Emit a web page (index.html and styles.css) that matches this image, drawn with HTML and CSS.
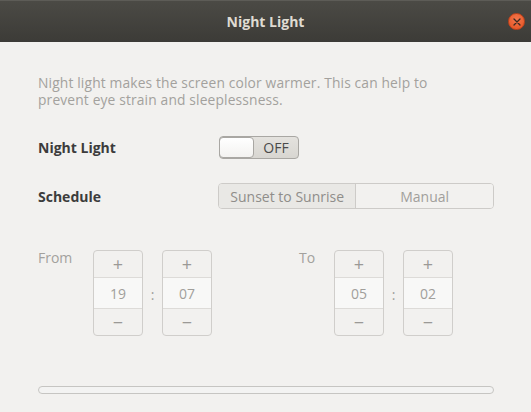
FILE: index.html
```html
<!DOCTYPE html>
<html>
  <head>
    <title>Night Light</title>
    <link rel="stylesheet" href="styles.css">
  </head>
  <body>
    <div class="titlebar">
      <span></span>
      <h1 class="title">Night Light</h1>
      <button class="close" aria-label="Close">
        <svg width="8" height="8" viewBox="0 0 8 8">
          <path d="M1 1 L7 7 M7 1 L1 7" stroke="#3a2a22" stroke-width="1.3" stroke-linecap="round" />
        </svg>
      </button>
    </div>

    <div class="content">
      <p class="desc">
        Night light makes the screen color warmer. This can help to<br />
        prevent eye strain and sleeplessness.
      </p>

      <div class="row">
        <span class="label">Night Light</span>
        <div class="switch">
          <span class="knob"></span>
          <span class="state">OFF</span>
        </div>
      </div>

      <div class="row schedule-row">
        <span class="label">Schedule</span>
        <div class="segmented">
          <button class="seg active">Sunset to Sunrise</button>
          <button class="seg">Manual</button>
        </div>
      </div>

      <div class="times">
        <div class="time-group from">
          <span class="time-label">From</span>
          <div class="spinner">
            <span class="step">+</span>
            <span class="value">19</span>
            <span class="step">−</span>
          </div>
          <span class="colon">:</span>
          <div class="spinner">
            <span class="step">+</span>
            <span class="value">07</span>
            <span class="step">−</span>
          </div>
        </div>
        <div class="time-group to">
          <span class="time-label">To</span>
          <div class="spinner">
            <span class="step">+</span>
            <span class="value">05</span>
            <span class="step">−</span>
          </div>
          <span class="colon">:</span>
          <div class="spinner">
            <span class="step">+</span>
            <span class="value">02</span>
            <span class="step">−</span>
          </div>
        </div>
      </div>

      <div class="bar"></div>
    </div>
  </body>
</html>
```

FILE: styles.css
```css
body {
  margin: 0;
  background-color: #f2f1ef;
  font-family: "Open Sans", "DejaVu Sans", sans-serif;
  font-size: 14px;
  color: #4c4c4c;
}
.titlebar {
  height: 42px;
  display: grid;
  grid-template-columns: 1fr auto 1fr;
  align-items: center;
  background: linear-gradient(#4b4a45, #3c3b37);
  border-top: 1px solid #5d5c57;
  box-sizing: border-box;
}
.title {
  margin: 0;
  font-size: 14px;
  font-weight: bold;
  color: #dfdbd2;
}
.close {
  justify-self: end;
  margin-right: 6px;
  width: 17px;
  height: 17px;
  padding: 0;
  border: 1px solid #c1421b;
  border-radius: 50%;
  background: radial-gradient(circle at 50% 35%, #f3774d, #e2501f);
  display: flex;
  align-items: center;
  justify-content: center;
}
.content {
  padding: 32px 37px 0 38px;
}
.desc {
  margin: 0;
  font-size: 13.8px;
  line-height: 17px;
  letter-spacing: 0.15px;
  color: #a3a19d;
}
.row {
  display: flex;
  align-items: center;
  margin-top: 28px;
}
.schedule-row {
  margin-top: 24px;
}
.label {
  width: 181px;
  font-weight: bold;
  color: #3c3c3c;
}
.switch {
  width: 78px;
  height: 21px;
  display: flex;
  align-items: center;
  border: 1px solid #a9a7a3;
  border-radius: 4px;
  background: linear-gradient(#e4e2de, #d8d6d1);
}
.knob {
  width: 35px;
  height: 21px;
  box-sizing: border-box;
  margin-left: -1px;
  border: 1px solid #a9a7a3;
  border-radius: 4px;
  background: linear-gradient(#ffffff, #f3f2f0);
}
.state {
  flex: 1;
  text-align: center;
  color: #4a4a4a;
}
.segmented {
  display: flex;
  width: 275px;
  height: 24px;
  border: 1px solid #cdcbc8;
  border-radius: 4px;
  overflow: hidden;
}
.seg {
  font: inherit;
  border: none;
  padding: 0;
  background: #f2f1ef;
  color: #a19f9b;
}
.seg.active {
  width: 137px;
  background: #e9e8e5;
  border-right: 1px solid #cdcbc8;
  color: #8f8d8a;
}
.seg + .seg {
  flex: 1;
}
.times {
  display: flex;
  margin-top: 41px;
}
.time-group {
  display: flex;
  align-items: flex-start;
}
.from {
  width: 261px;
}
.time-label {
  color: #a3a19d;
  line-height: 16px;
}
.from .time-label {
  width: 55px;
}
.to .time-label {
  width: 35px;
}
.spinner {
  width: 48px;
  display: flex;
  flex-direction: column;
  border: 1px solid #d0cecb;
  border-radius: 4px;
  overflow: hidden;
  color: #a19f9b;
}
.step {
  height: 26px;
  display: flex;
  align-items: center;
  justify-content: center;
  font-size: 18px;
  color: #9b9996;
}
.value {
  height: 30px;
  display: flex;
  align-items: center;
  justify-content: center;
  background: #f8f8f7;
  border-top: 1px solid #dddbd8;
  border-bottom: 1px solid #dddbd8;
}
.colon {
  width: 19px;
  text-align: center;
  margin-top: 35px;
  color: #a19f9b;
}
.bar {
  margin-top: 50px;
  height: 6px;
  border: 1px solid #c6c5c2;
  border-radius: 4px;
  background: #f3f3f2;
}
```
